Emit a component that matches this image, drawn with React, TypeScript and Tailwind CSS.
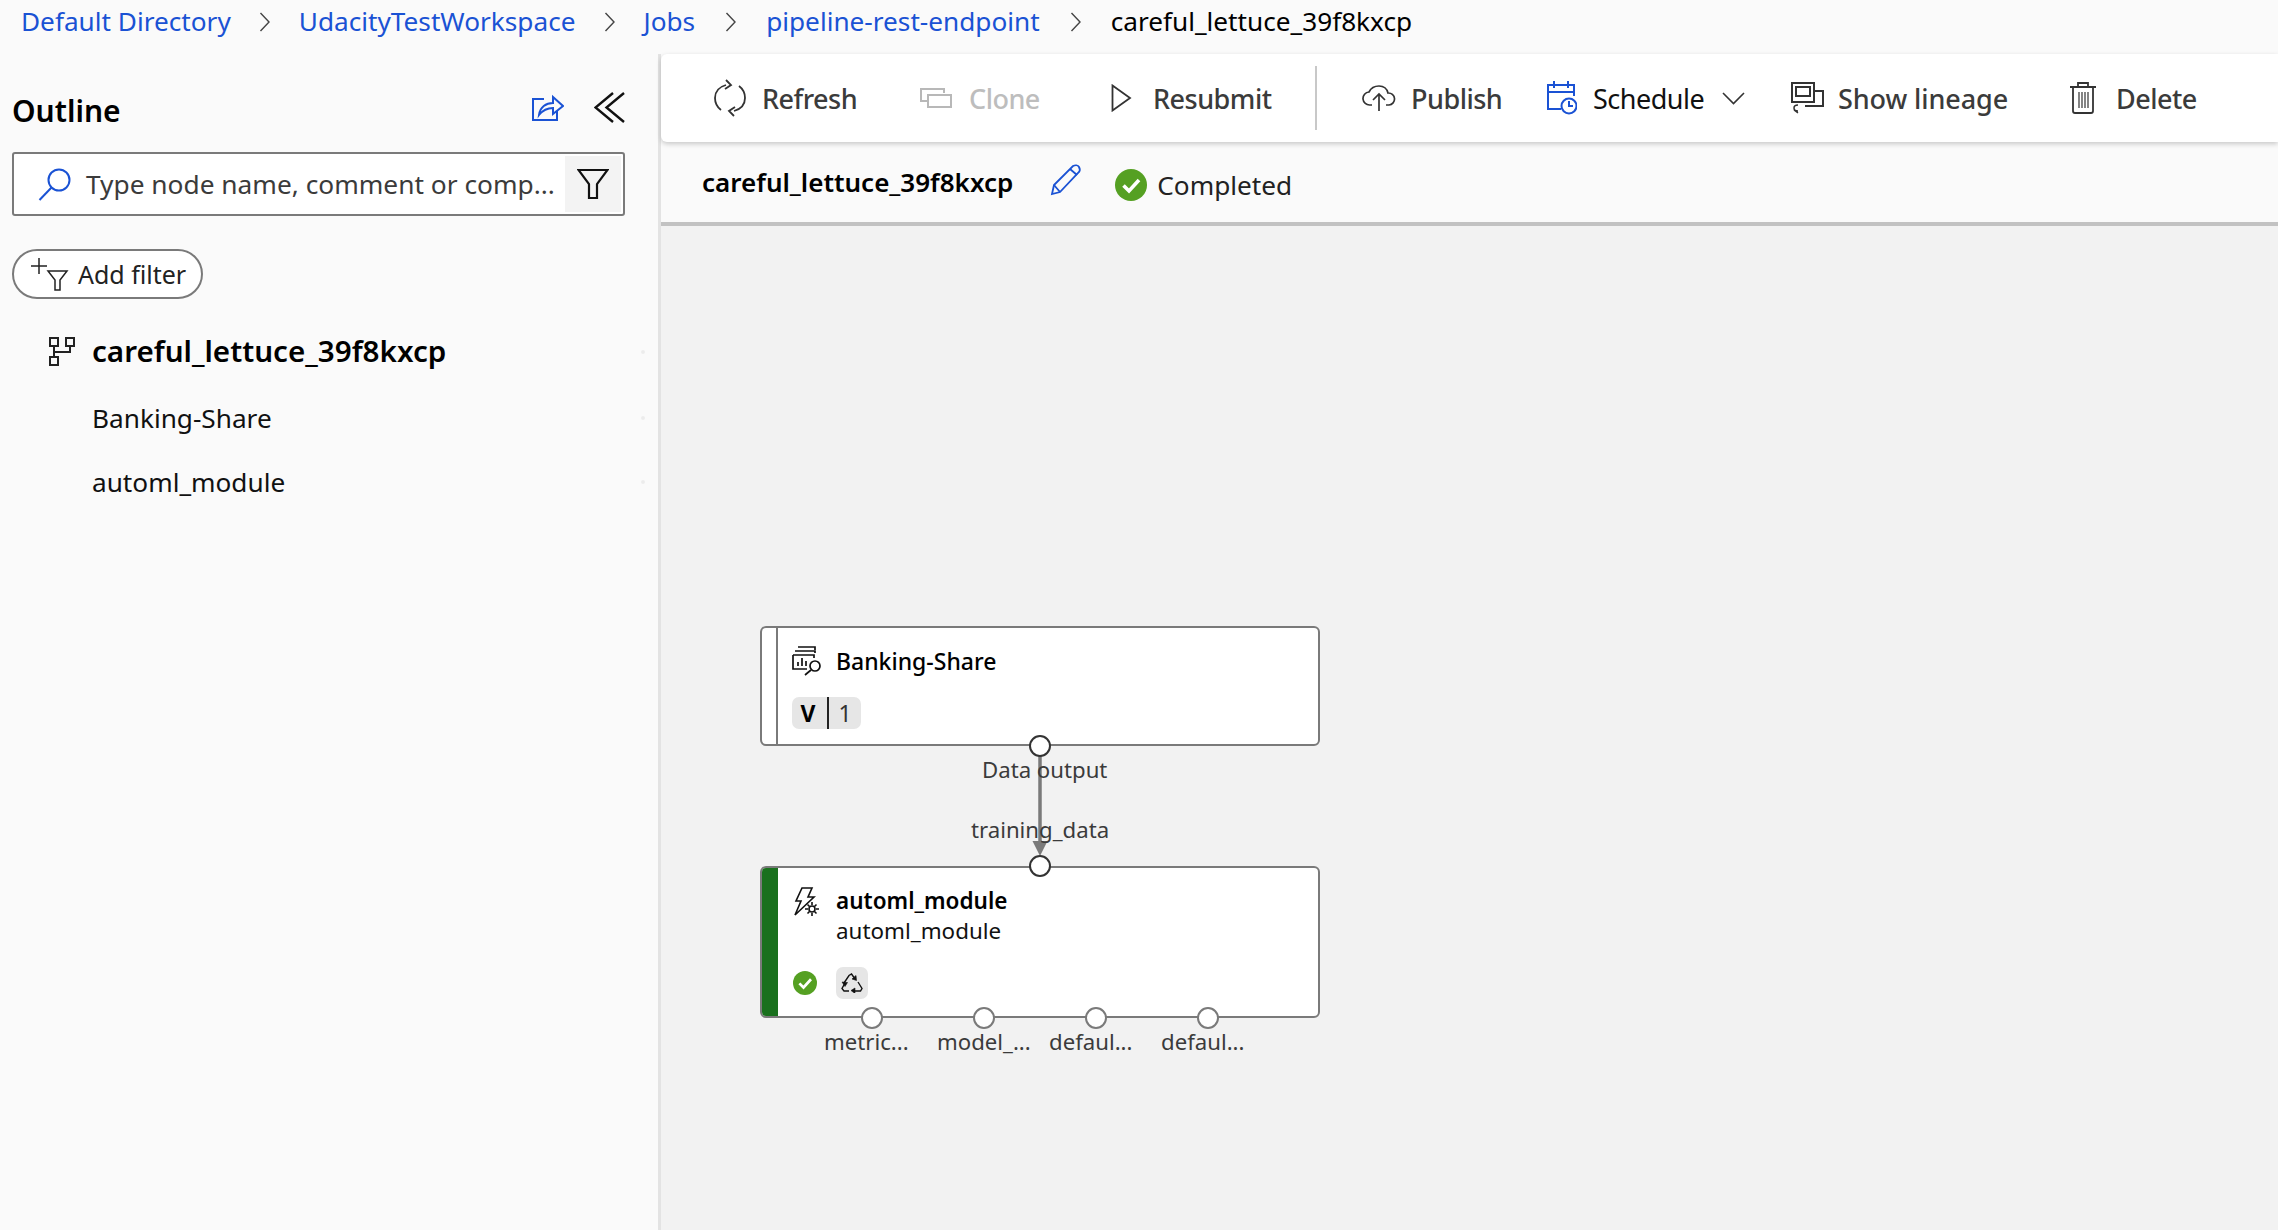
import type { ReactNode } from "react";

const FONT = "font-['Noto_Sans','Open_Sans',sans-serif]";

function Chevron({ className }: { className?: string }) {
  return (
    <svg width="12" height="22" viewBox="0 0 12 22" fill="none" stroke="#444" strokeWidth="1.4" className={`shrink-0 ${className ?? "mx-[28px]"}`}>
      <path d="M1.5 2 10 11l-8.5 9" />
    </svg>
  );
}

function Check({ size }: { size: number }) {
  return (
    <svg width={size} height={size} viewBox="0 0 32 32" className="shrink-0">
      <circle cx="16" cy="16" r="16" fill="#55a022" />
      <path d="M8.5 16.5 14 22 24 11" fill="none" stroke="#fff" strokeWidth="3.6" />
    </svg>
  );
}

function ToolButton({ icon, label, className, text }: { icon: ReactNode; label: string; className: string; text?: string }) {
  return (
    <div className={`flex items-center ${className}`}>
      {icon}
      <span className={`text-[27px] leading-none ${text ?? "font-medium tracking-[-0.5px] text-[#3b3b3b]"}`}>{label}</span>
    </div>
  );
}

function Port({ x, y, dark }: { x: number; y: number; dark?: boolean }) {
  return (
    <div
      className={`absolute h-[22px] w-[22px] -translate-x-1/2 -translate-y-1/2 rounded-full border-2 bg-white ${dark ? "border-[#333]" : "border-[#7a7a7a]"}`}
      style={{ left: x, top: y }}
    />
  );
}

function PortLabel({ x, y, children }: { x: number; y: number; children: ReactNode }) {
  return (
    <span className="absolute whitespace-nowrap text-[22.2px] leading-none text-[#3b3b3b]" style={{ left: x, top: y }}>
      {children}
    </span>
  );
}

export default function App() {
  return (
    <div className={`flex h-screen w-screen flex-col overflow-hidden bg-[#fafafa] ${FONT}`}>
      {/* Breadcrumb */}
      <div className="flex h-[43px] shrink-0 items-center pl-[21px] text-[26.2px] leading-none text-[#1a52d4]">
        <span>Default Directory</span>
        <Chevron />
        <span>UdacityTestWorkspace</span>
        <Chevron />
        <span>Jobs</span>
        <Chevron className="ml-[30px] mr-[29px]" />
        <span>pipeline-rest-endpoint</span>
        <Chevron className="ml-[30px] mr-[29px]" />
        <span className="text-black">careful_lettuce_39f8kxcp</span>
      </div>

      <div className="mt-[11px] flex min-h-0 flex-1">
        {/* Outline */}
        <aside className="relative w-[661px] shrink-0 border-r-[3px] border-[#e3e3e3] bg-[#fafafa] pl-[12px] pr-[33px]">
          <div className="flex h-[98px] items-center justify-between pt-[16px]">
            <h2 className="text-[30px] font-semibold leading-none text-black">Outline</h2>
            <div className="flex items-center gap-[30px]">
              <svg width="32" height="28" viewBox="0 0 32 28" fill="none" stroke="#1a52d4" strokeWidth="2" className="mb-[8px]">
                <path d="M12 6H1v21h24v-9" />
                <path d="M7 22c1-8 7-12 14-12V4l10 9-10 8v-6c-6 0-10 2-14 7Z" />
              </svg>
              <svg width="31" height="31" viewBox="0 0 31 31" fill="none" stroke="#111" strokeWidth="2.4" className="mb-[8px]">
                <path d="M19 1 1.500 15.500 19 30" />
                <path d="M30 1 12.500 15.500 30 30" />
              </svg>
            </div>
          </div>

          <div className="flex h-[64px] items-center rounded-[3px] border-2 border-[#7a7a7a] bg-white pl-[24px] pr-[2px]">
            <svg width="33" height="33" viewBox="0 0 33 33" fill="none" stroke="#1a52d4" strokeWidth="2" className="shrink-0">
              <circle cx="21" cy="12" r="10.5" />
              <path d="M13.5 19.5 1.5 32" />
            </svg>
            <span className="ml-[15px] flex-1 whitespace-nowrap text-[26.3px] leading-none text-[#3b3b3b]">Type node name, comment or comp...</span>
            <div className="flex h-[56px] w-[56px] shrink-0 items-center justify-center bg-[#f3f3f3]">
              <svg width="32" height="32" viewBox="0 0 32 32" fill="none" stroke="#111" strokeWidth="2.2">
                <path d="M1.5 2h29L20 16v14h-8V16Z" />
              </svg>
            </div>
          </div>

          <div className="mt-[33px] flex h-[50px] w-[191px] items-center rounded-full border-2 border-[#7a7a7a] bg-white pl-[16px]">
            <svg width="42" height="36" viewBox="0 0 42 36" fill="none" stroke="#222" strokeWidth="1.5" className="shrink-0">
              <path d="M9 2v16M1 10h16" />
              <path d="M18 15h19l-7 9v10h-5V24Z" />
            </svg>
            <span className="ml-[6px] text-[25px] leading-none text-[#222]">Add filter</span>
          </div>

          <div className="mt-[27px] flex h-[50px] items-center pl-[37px]">
            <svg width="26" height="29" viewBox="0 0 26 29" fill="none" stroke="#222" strokeWidth="2" className="shrink-0">
              <rect x="1" y="1" width="8" height="8" />
              <rect x="17" y="1" width="8" height="8" />
              <rect x="1" y="20" width="8" height="8" />
              <path d="M5 9v11M5 15h16V9" />
            </svg>
            <span className="ml-[17px] text-[29.6px] font-semibold leading-none text-black">careful_lettuce_39f8kxcp</span>
          </div>
          <div className="mt-[17px] flex h-[50px] items-center pl-[80px] text-[26.2px] leading-none text-[#111]">Banking-Share</div>
          <div className="mt-[14px] flex h-[50px] items-center pl-[80px] text-[26.2px] leading-none text-[#111]">automl_module</div>

          <span className="absolute left-[641px] top-[296px] h-[4px] w-[4px] rounded-full bg-[#ececec]" />
          <span className="absolute left-[641px] top-[362px] h-[4px] w-[4px] rounded-full bg-[#ececec]" />
          <span className="absolute left-[641px] top-[426px] h-[4px] w-[4px] rounded-full bg-[#ececec]" />
        </aside>

        <main className="flex min-w-0 flex-1 flex-col">
          {/* Toolbar */}
          <div className="relative z-10 flex h-[88px] shrink-0 items-center rounded-l-[6px] bg-white shadow-[0_2px_5px_rgba(0,0,0,0.2)]">
            <ToolButton
              className="ml-[52px] w-[207px]"
              label="Refresh"
              icon={
                <svg width="34" height="38" viewBox="0 0 34 38" fill="none" stroke="#333" strokeWidth="1.8" className="mr-[15px]">
                  <path d="M13 6C6 8 2 13 2 19c0 5 2 9 6 12" />
                  <path d="M21 32c7-2 11-7 11-13 0-5-2-9-6-12" />
                  <path d="M13 1l5 5-6 4" />
                  <path d="M21 37l-5-5 6-4" />
                </svg>
              }
            />
            <ToolButton
              className="w-[191px]"
              label="Clone"
              text="font-medium tracking-[-0.5px] text-[#bdbdbd]"
              icon={
                <svg width="32" height="20" viewBox="0 0 32 20" fill="none" stroke="#b8b8b8" strokeWidth="2" className="mr-[17px]">
                  <path d="M24 5V1H1v12h7" />
                  <rect x="8" y="7" width="23" height="12" />
                </svg>
              }
            />
            <ToolButton
              className="w-[204px]"
              label="Resubmit"
              icon={
                <svg width="21" height="28" viewBox="0 0 21 28" fill="none" stroke="#333" strokeWidth="1.8" className="mr-[21px]">
                  <path d="M1.5 1.5 19 14 1.5 26.5Z" />
                </svg>
              }
            />
            <div className="h-[64px] w-[2px] bg-[#c8c8c8]" />
            <ToolButton
              className="ml-[45px] w-[185px]"
              label="Publish"
              icon={
                <svg width="34" height="26" viewBox="0 0 34 26" fill="none" stroke="#333" strokeWidth="1.7" className="mr-[15px]">
                  <path d="M10 20H8a6.5 6.5 0 0 1-1-13C9 3 13 1 17 1c5 0 8 3 9 7a6 6 0 0 1 1 12h-3" />
                  <path d="M17 26V10M11 15l6-6 6 6" />
                </svg>
              }
            />
            <ToolButton
              className="w-[175px]"
              label="Schedule"
              text="font-normal tracking-[-0.5px] text-[#111]"
              icon={
                <svg width="30" height="34" viewBox="0 0 30 34" fill="none" stroke="#1a52d4" strokeWidth="2" className="mr-[16px]">
                  <path d="M14 28H1V4h26v11" />
                  <path d="M1 11h26M7 0v7M21 0v7" />
                  <circle cx="22" cy="25" r="7.5" fill="#fff" />
                  <path d="M22 20v5h4" />
                </svg>
              }
            />
            <svg width="23" height="13" viewBox="0 0 23 13" fill="none" stroke="#333" strokeWidth="1.6" className="mr-[46px]">
              <path d="M1 1l10.5 10.5L22 1" />
            </svg>
            <ToolButton
              className="w-[279px]"
              label="Show lineage"
              text="font-medium tracking-[-0.1px] text-[#3b3b3b]"
              icon={
                <svg width="33" height="32" viewBox="0 0 33 32" fill="none" stroke="#333" strokeWidth="2" className="mr-[14px]">
                  <rect x="1" y="1" width="22" height="19" />
                  <rect x="5" y="5" width="14" height="9" />
                  <path d="M23 9h9v15H14" />
                  <path d="M7 23c-3 0-4 1-4 3s2 3 4 3M3 28l4 3" strokeWidth="1.5" />
                </svg>
              }
            />
            <ToolButton
              className=""
              label="Delete"
              icon={
                <svg width="26" height="32" viewBox="0 0 26 32" fill="none" stroke="#333" strokeWidth="1.8" className="mr-[20px]">
                  <path d="M0 5h26M8 5V1h10v4" />
                  <path d="M3 5v24a2 2 0 0 0 2 2h16a2 2 0 0 0 2-2V5" />
                  <path d="M9 10v16M12 10v16M15 10v16M18 10v16" strokeWidth="1.2" />
                </svg>
              }
            />
          </div>

          {/* Run name */}
          <div className="flex h-[84px] shrink-0 items-center border-b-4 border-[#c2c2c2] bg-[#fafafa] pl-[41px]">
            <span className="text-[26px] font-semibold leading-none text-black">careful_lettuce_39f8kxcp</span>
            <svg width="32" height="32" viewBox="0 0 32 32" fill="none" stroke="#1a52d4" strokeWidth="1.8" className="ml-[37px] mb-[4px]">
              <path d="M2 30l2-9L23 2c2-1 5-1 6 1s1 4 0 5L10 28Z" />
              <path d="M20 5l7 6M4 21l6 7" />
            </svg>
            <div className="ml-[33px] mt-[5px]">
              <Check size={32} />
            </div>
            <span className="ml-[10px] mt-[6px] text-[26.2px] leading-none text-[#222]">Completed</span>
          </div>

          {/* Canvas: x/y below are relative to this box, origin at (661, 226) */}
          <div className="relative min-h-0 flex-1 bg-[#f2f2f2]">
            <svg width="24" height="100" viewBox="0 0 24 100" className="absolute left-[367px] top-[530px]">
              <path d="M12 0v88" stroke="#7a7a7a" strokeWidth="3.5" />
              <path d="M4.500 85h15L12 100Z" fill="#7a7a7a" />
            </svg>

            <PortLabel x={321} y={533}>Data output</PortLabel>
            <PortLabel x={310} y={593}>training_data</PortLabel>

            {/* Banking-Share node */}
            <div className="absolute left-[99px] top-[400px] flex h-[120px] w-[560px] overflow-hidden rounded-[6px] border-2 border-[#7a7a7a] bg-white">
              <div className="w-[16px] border-r-2 border-[#7a7a7a]" />
              <div className="flex flex-col pl-[14px] pt-[15px]">
                <div className="flex h-[36px] items-center">
                  <svg width="30" height="30" viewBox="0 0 30 30" fill="none" stroke="#111" strokeWidth="1.7" className="shrink-0">
                    <path d="M6 1h17v3" />
                    <path d="M3 5h20v2" />
                    <path d="M1 9h21v3M1 9v14h14" />
                    <path d="M6 20v-4M10 20v-8M14 20v-5" />
                    <circle cx="23" cy="20" r="5" />
                    <path d="M19 24l-6 5" />
                  </svg>
                  <span className="ml-[14px] text-[23px] font-medium leading-none text-black">Banking-Share</span>
                </div>
                <div className="mt-[18px] flex h-[32px] w-[69px] items-center rounded-[7px] bg-[#e6e6e6] text-[23px] leading-none">
                  <span className="w-[37px] border-r-2 border-[#222] pr-[3px] text-center font-bold leading-[32px] text-black">V</span>
                  <span className="flex-1 text-center text-[#333]">1</span>
                </div>
              </div>
            </div>

            {/* automl_module node */}
            <div className="absolute left-[99px] top-[640px] flex h-[152px] w-[560px] overflow-hidden rounded-[6px] border-2 border-[#7a7a7a] bg-white">
              <div className="w-[16px] bg-[#19701d]" />
              <div className="flex flex-col pl-[15px] pt-[18px]">
                <div className="flex">
                  <svg width="26" height="30" viewBox="0 0 26 30" fill="none" stroke="#111" strokeWidth="1.6" className="mt-[1px] shrink-0">
                    <path d="M9 1h10l-4 9h6L2 28l6-14H3Z" />
                    <circle cx="19" cy="22" r="3" />
                    <path d="M19 15v3M19 26v3M12 22h3M23 22h3M14.5 17.5l2 2M21.5 24.5l2 2M23.500 17.5l-2 2M16.500 24.500l-2 2" />
                  </svg>
                  <div className="ml-[17px] flex flex-col">
                    <span className="text-[22.5px] font-semibold leading-[30px] text-black">automl_module</span>
                    <span className="text-[22.4px] leading-[30px] text-[#111]">automl_module</span>
                  </div>
                </div>
                <div className="mt-[21px] flex items-center">
                  <Check size={24} />
                  <div className="ml-[19px] flex h-[32px] w-[32px] items-center justify-center rounded-[7px] bg-[#e6e6e6]">
                    <svg width="22" height="20" viewBox="0 0 22 20" fill="none" stroke="#111" strokeWidth="1.4">
                      <path d="M3 10 8 2.500 10.500 1l2.500 3.500" />
                      <path d="M15 2.500l0.500 5-4.500-1.500Z" fill="#111" strokeWidth="0.6" />
                      <path d="M17 9l4 6.500-1.500 2.500H14" />
                      <path d="M14 15v5.500L10 17.500Z" fill="#111" strokeWidth="0.6" />
                      <path d="M8 18H3l-2-2.500L3.500 11" />
                      <path d="M1 9l5.500 0.500-2.500 4Z" fill="#111" strokeWidth="0.6" />
                    </svg>
                  </div>
                </div>
              </div>
            </div>

            <Port x={379} y={520} dark />
            <Port x={379} y={640} dark />
            <Port x={211} y={792} />
            <Port x={323} y={792} />
            <Port x={435} y={792} />
            <Port x={547} y={792} />

            <PortLabel x={163} y={805}>metric...</PortLabel>
            <PortLabel x={276} y={805}>model_...</PortLabel>
            <PortLabel x={388} y={805}>defaul...</PortLabel>
            <PortLabel x={500} y={805}>defaul...</PortLabel>
          </div>
        </main>
      </div>
    </div>
  );
}
